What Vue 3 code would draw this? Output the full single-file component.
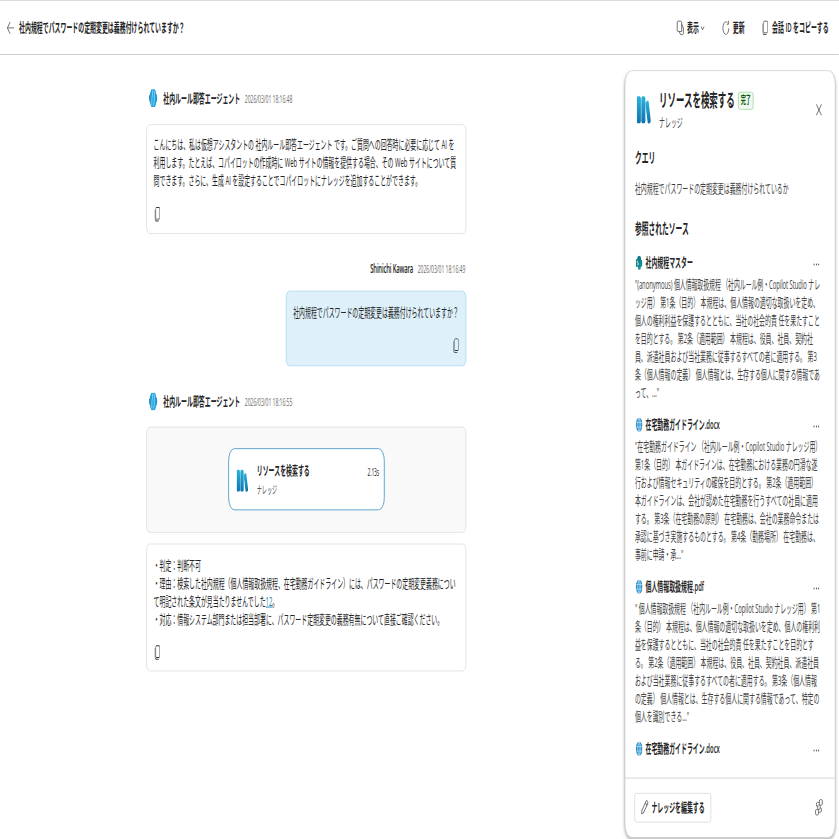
<template>
  <div class="viewport">
    <div class="page">
      <!-- shared icon shapes -->
      <svg class="defs" width="0" height="0">
        <defs>
          <linearGradient id="bookFill" x1="0" y1="0" x2="0" y2="1">
            <stop offset="0" stop-color="#2bb3dc" />
            <stop offset="1" stop-color="#0a72ae" />
          </linearGradient>
          <linearGradient id="agentFill" x1="0" y1="0" x2="1" y2="0">
            <stop offset="0" stop-color="#1b84c4" />
            <stop offset="0.5" stop-color="#2bb0e4" />
            <stop offset="1" stop-color="#0c8cc8" />
          </linearGradient>
        </defs>
        <symbol id="copy" viewBox="0 0 20 20">
          <path fill="currentColor" d="M8 2a2 2 0 0 0-2 2v10c0 1.1.9 2 2 2h6a2 2 0 0 0 2-2V4a2 2 0 0 0-2-2H8ZM7 4a1 1 0 0 1 1-1h6a1 1 0 0 1 1 1v10a1 1 0 0 1-1 1H8a1 1 0 0 1-1-1V4ZM4 6c0-.74.4-1.39 1-1.73V14.5A2.5 2.5 0 0 0 7.5 17h6.23c-.34.6-.99 1-1.73 1H7.5A3.5 3.5 0 0 1 4 14.5V6Z" />
        </symbol>
        <symbol id="books" viewBox="0 0 32 32">
          <rect x="0" y="1" width="9.500" height="30" rx="3" fill="url(#bookFill)" />
          <rect x="10.500" y="1" width="9" height="30" rx="3" fill="url(#bookFill)" />
          <path d="M20.500 7.500l3.500-1.600a2 2 0 0 1 2.800 1.600L31.500 28a2.400 2.400 0 0 1-1.800 2.700l-2.600.4a2.400 2.400 0 0 1-2.800-2L19.800 10a2.300 2.300 0 0 1 .7-2.500Z" fill="url(#bookFill)" />
        </symbol>
        <symbol id="agent" viewBox="0 0 20 20">
          <path d="M6 1h8L19.500 10 14 19H6L.5 10Z" fill="url(#agentFill)" stroke="url(#agentFill)" stroke-width="1.500" stroke-linejoin="round" />
          <path d="M9 1.500L7 11v7M13.500 2v7L11.500 18" fill="none" stroke="#a5dcf4" stroke-width="1.500" />
        </symbol>
        <symbol id="globe" viewBox="0 0 16 16">
          <circle cx="8" cy="8" r="7.800" fill="#1f86c8" />
          <path d="M1 5.500h14M1 10.500h14M8 .5v15M8 .5c-5 4-5 11 0 15M8 .5c5 4 5 11 0 15" fill="none" stroke="#d5ecf8" stroke-width="0.900" />
        </symbol>
        <symbol id="sharepoint" viewBox="0 0 16 16">
          <circle cx="8" cy="4.800" r="4.600" fill="#0b7c83" />
          <circle cx="11.500" cy="8.500" r="4.200" fill="#168a92" />
          <circle cx="8.500" cy="12.300" r="3.500" fill="#1f949b" />
          <rect x="0" y="4" width="9" height="8.500" rx="1" fill="#0a7c86" />
          <path d="M6.300 6.200H3.200v2H6v2.200H2.800" fill="none" stroke="#fff" stroke-width="1" />
        </symbol>
      </svg>

      <header class="topbar">
        <svg class="icon back" viewBox="0 0 20 20"><path d="M9 3.500L2.500 10 9 16.500M2.500 10H18" /></svg>
        <h1 class="topbar_ttl">社内規程でパスワードの定期変更は義務付けられていますか？</h1>
        <nav class="actions">
          <button class="action">
            <svg class="icon" viewBox="0 0 20 20"><path d="M13.500 14V4.500a2 2 0 0 0-2-2H5a2 2 0 0 0-2 2v7.500a2 2 0 0 0 2 2h8.500M14 6l3.500 4v5.500a2 2 0 0 1-2 2H11L7.500 14" /></svg>
            表示
            <svg class="chevron" viewBox="0 0 12 12"><path d="M2.500 4.500L6 8l3.500-3.500" /></svg>
          </button>
          <button class="action">
            <svg class="icon" viewBox="0 0 20 20"><path d="M17 10.500A7 7 0 1 1 14 4.500M16 2v4h-4" /></svg>
            更新
          </button>
          <button class="action">
            <svg class="glyph"><use href="#copy" /></svg>
            会話 ID をコピーする
          </button>
        </nav>
      </header>

      <main class="body">
        <section class="chat">
          <div class="who">
            <svg class="avatar"><use href="#agent" /></svg>
            <strong>社内ルール即答エージェント</strong><time>2026/03/01 18:16:48</time>
          </div>
          <article class="card card_hello">
            <p v-for="line in greeting" :key="line">{{ line }}</p>
            <svg class="glyph copy"><use href="#copy" /></svg>
          </article>

          <div class="who who_me">
            <strong>Shinichi Kawara</strong><time>2026/03/01 18:16:49</time>
          </div>
          <article class="card card_me">
            <p>社内規程でパスワードの定期変更は義務付けられていますか？</p>
            <svg class="glyph copy"><use href="#copy" /></svg>
          </article>

          <div class="who who_answer">
            <svg class="avatar"><use href="#agent" /></svg>
            <strong>社内ルール即答エージェント</strong><time>2026/03/01 18:16:55</time>
          </div>
          <div class="trace">
            <div class="node">
              <svg class="node_icon" viewBox="0 0 32 32" preserveAspectRatio="none"><use href="#books" width="32" height="32" /></svg>
              <div class="node_text">
                <strong>リソースを検索する</strong>
                <span>ナレッジ</span>
              </div>
              <span class="node_time">2.13s</span>
            </div>
          </div>
          <article class="card card_answer">
            <p>・判定：判断不可</p>
            <p>・理由：検索した社内規程（個人情報取扱規程、在宅勤務ガイドライン）には、パスワードの定期変更義務につい</p>
            <p>て明記された条文が見当たりませんでした<a>12</a>。</p>
            <p>・対応：情報システム部門または担当部署に、パスワード定期変更の義務有無について直接ご確認ください。</p>
            <svg class="glyph copy"><use href="#copy" /></svg>
          </article>
        </section>

        <aside class="panel">
          <div class="panel_body">
            <div class="panel_head">
              <svg class="panel_icon" viewBox="0 0 32 32" preserveAspectRatio="none"><use href="#books" width="32" height="32" /></svg>
              <div class="panel_names">
                <div class="panel_row"><h2>リソースを検索する</h2><span class="badge">完了</span></div>
                <p>ナレッジ</p>
              </div>
              <svg class="icon close" viewBox="0 0 20 20"><path d="M4 4l12 12M16 4L4 16" /></svg>
            </div>
            <h3>クエリ</h3>
            <p class="query">社内規程でパスワードの定期変更は義務付けられているか</p>
            <h3 class="sources_ttl">参照されたソース</h3>
            <section v-for="(source, i) in sources" :key="i" class="source">
              <div class="source_head">
                <svg class="source_icon"><use :href="'#' + source.icon" /></svg>
                <strong>{{ source.name }}</strong>
                <svg class="more" viewBox="0 0 16 16"><circle cx="2.500" cy="8" r="1.100" /><circle cx="8" cy="8" r="1.100" /><circle cx="13.500" cy="8" r="1.100" /></svg>
              </div>
              <p v-for="line in source.lines" :key="line">{{ line }}</p>
            </section>
          </div>
          <footer class="panel_foot">
            <button class="edit">
              <svg class="icon" viewBox="0 0 20 20"><path d="M13.500 3.200a2.200 2.200 0 0 1 3.300 3.300L7 16.300l-4.200 1 1-4.200ZM12 4.800L15.200 8" /></svg>
              ナレッジを編集する
            </button>
            <svg class="icon flow" viewBox="0 0 20 20"><rect x="11" y="1.500" width="7" height="6" rx="2" /><rect x="2" y="12.500" width="7" height="6" rx="2" /><rect x="7" y="7.500" width="6" height="5" rx="2" /><path d="M11 4.500H6.500a2 2 0 0 0 0 5M9 15.500h4.500a2 2 0 0 0 0-5" /></svg>
          </footer>
        </aside>
      </main>
    </div>
  </div>
</template>

<script setup>
const greeting = [
  'こんにちは、私は仮想アシスタントの 社内ルール即答エージェント です。ご質問への回答時に必要に応じて AI を',
  '利用します。たとえば、コパイロットの作成時に Web サイトの情報を提供する場合、その Web サイトについて質',
  '問できます。さらに、生成 AI を設定することでコパイロットにナレッジを追加することができます。',
];

const sources = [
  {
    name: '社内規程マスター',
    icon: 'sharepoint',
    lines: [
      '"(anonymous) 個人情報取扱規程 （社内ルール例・Copilot Studio ナレ',
      'ッジ用） 第1条（目的） 本規程は、個人情報の適切な取扱いを定め、',
      '個人の権利利益を保護するとともに、当社の社会的責 任を果たすこと',
      'を目的とする。 第2条（適用範囲） 本規程は、役員、社員、契約社',
      '員、派遣社員および当社業務に従事するすべての者に適用する。 第3',
      '条（個人情報の定義） 個人情報とは、生存する個人に関する情報であ',
      'って、..."',
    ],
  },
  {
    name: '在宅勤務ガイドライン.docx',
    icon: 'globe',
    lines: [
      '"在宅勤務ガイドライン （社内ルール例・Copilot Studio ナレッジ用）',
      '第1条（目的） 本ガイドラインは、在宅勤務における業務の円滑な遂',
      '行および情報セキュリティの確保を目的とする。 第2条（適用範囲）',
      '本ガイドラインは、会社が認めた在宅勤務を行うすべての社員に適用',
      'する。 第3条（在宅勤務の原則） 在宅勤務は、会社の業務命令または',
      '承認に基づき実施するものとする。 第4条（勤務場所） 在宅勤務は、',
      '事前に申請・承..."',
    ],
  },
  {
    name: '個人情報取扱規程.pdf',
    icon: 'globe',
    lines: [
      '" 個人情報取扱規程 （社内ルール例・Copilot Studio ナレッジ用） 第1',
      '条（目的） 本規程は、個人情報の適切な取扱いを定め、個人の権利利',
      '益を保護するとともに、当社の社会的責 任を果たすことを目的とす',
      'る。 第2条（適用範囲） 本規程は、役員、社員、契約社員、派遣社員',
      'および当社業務に従事するすべての者に適用する。 第3条（個人情報',
      'の定義） 個人情報とは、生存する個人に関する情報であって、特定の',
      '個人を識別できる..."',
    ],
  },
  { name: '在宅勤務ガイドライン.docx', icon: 'globe', lines: [] },
];
</script>

<style>
body {
  margin: 0;
  background: #fff;
}
</style>

<style scoped>
* {
  box-sizing: border-box;
}
h1, h2, h3, p {
  margin: 0;
  white-space: nowrap;
}
strong {
  font-weight: 600;
}
button {
  font: inherit;
  color: inherit;
  background: none;
  border: 0;
  padding: 0;
  white-space: nowrap;
}
.viewport {
  width: 839px;
  height: 839px;
  overflow: hidden;
}
/* wide desktop layout condensed into the square viewport */
.page {
  width: 1983px;
  height: 932px;
  transform: scale(0.423, 0.9);
  transform-origin: 0 0;
  display: flex;
  flex-direction: column;
  border-top: 1px solid #d6d6d6;
  background: #fff;
  color: #242424;
  font: 14px/20px "Open Sans", "Noto Sans CJK JP", sans-serif;
}
.defs {
  display: block;
  height: 0;
}
.icon, .chevron {
  width: 20px;
  height: 20px;
  fill: none;
  stroke: #424242;
  stroke-width: 1.1;
  flex: none;
}
.chevron {
  width: 12px;
  height: 12px;
  margin-left: -3px;
}
.glyph {
  width: 20px;
  height: 20px;
  flex: none;
  color: #333;
}
.topbar {
  height: 60px;
  flex: none;
  display: flex;
  align-items: center;
  padding: 1px 24px 0 15px;
  border-bottom: 1px solid #c8c8c8;
}
.topbar_ttl {
  font-size: 14px;
  line-height: 20px;
  font-weight: 700;
  margin-left: 10px;
}
.actions {
  display: flex;
  gap: 39px;
  margin-left: auto;
}
.action {
  display: flex;
  align-items: center;
  gap: 6px;
  font-weight: 600;
}
.body {
  flex: 1;
  display: flex;
  justify-content: space-between;
  padding: 17px 8px 0 346px;
}
.chat {
  width: 756px;
  padding-top: 21px;
}
.who {
  height: 20px;
  display: flex;
  align-items: center;
  padding-left: 6px;
}
.who time {
  margin-left: 11px;
  font-size: 12px;
  line-height: 18px;
  padding-top: 2px;
  letter-spacing: -0.1px;
  color: #6b6b6b;
}
.avatar {
  width: 20px;
  height: 20px;
  margin-right: 14px;
}
.who_me {
  justify-content: flex-end;
  padding-right: 2px;
  margin-top: 28px;
}
.who_me strong {
  letter-spacing: -0.4px;
}
.who_answer {
  margin-top: 29px;
}
.card {
  border: 1px solid #d6d6d6;
  border-radius: 8px;
  padding: 12px 16px;
  background: #fff;
}
.copy {
  display: block;
  margin-top: 17px;
  margin-left: -1px;
}
.card_hello {
  height: 122px;
  margin-top: 19px;
}
.card_me {
  width: 426px;
  height: 84px;
  margin: 15px 0 0 auto;
  padding-top: 13px;
  background: #def1fb;
  border-color: #9fd3ea;
}
.card_me .copy {
  margin-left: auto;
  margin-right: -3px;
}
.trace {
  height: 118px;
  margin-top: 18px;
  padding: 23px 192px 0 193px;
  background: #faf9f9;
  border: 1px solid #d6d6d6;
  border-radius: 8px;
}
.node {
  height: 69px;
  display: flex;
  align-items: center;
  padding: 2px 12px 0 18px;
  background: #fff;
  border: 1.500px solid #0f7fb5;
  border-radius: 14px;
}
.node_icon {
  width: 28px;
  height: 26px;
  margin-right: 20px;
}
.node_text {
  display: flex;
  flex-direction: column;
  gap: 2px;
}
.node_text span {
  font-size: 12px;
  color: #424242;
}
.node_time {
  align-self: flex-start;
  margin: 14px 0 0 auto;
  font-size: 12px;
  letter-spacing: -0.5px;
}
.card_answer {
  height: 142px;
  margin-top: 12px;
  padding-top: 13px;
}
.card_answer a {
  color: #0f7fae;
  text-decoration: underline;
}
.panel {
  width: 498px;
  height: 853px;
  display: flex;
  flex-direction: column;
  border: 1px solid #c8c8c8;
  border-radius: 16px;
  background: #fff;
  box-shadow: 0 2px 4px rgba(0, 0, 0, 0.24);
}
.panel_body {
  flex: 1;
  padding: 18px 24px 0 23px;
}
.panel_head {
  display: flex;
  align-items: center;
  height: 49px;
}
.panel_icon {
  width: 34px;
  height: 32px;
  margin: 0 19px 0 4px;
}
.panel_row {
  display: flex;
  align-items: center;
  gap: 8px;
  height: 27px;
}
.panel h2 {
  font-size: 20px;
  line-height: 28px;
}
.panel_names p {
  font-size: 14px;
  line-height: 19px;
  color: #424242;
}
.badge {
  height: 20px;
  padding: 0 5px;
  font-size: 12px;
  line-height: 18px;
  font-weight: 600;
  color: #0b5a0b;
  background: #f1faf1;
  border: 1px solid #8fcf8f;
  border-radius: 4px;
}
.close {
  margin-left: auto;
  margin-right: 4px;
}
.panel h3 {
  margin-top: 18px;
  font-size: 16px;
  line-height: 22px;
}
.query {
  margin-top: 13px;
  color: #424242;
}
.panel .sources_ttl {
  margin-top: 24px;
}
.source {
  height: 180px;
  color: #424242;
}
.source:last-child {
  height: 20px;
}
.sources_ttl + .source {
  margin-top: 17px;
}
.sources_ttl + .source p:nth-child(2) {
  letter-spacing: -0.17px;
}
.source:nth-last-child(2) p:nth-child(2) {
  letter-spacing: -0.08px;
}
.source_head {
  display: flex;
  align-items: center;
  height: 20px;
  margin-bottom: 4px;
  color: #242424;
}
.source_icon {
  width: 16px;
  height: 16px;
  margin: 0 7px 0 2px;
}
.more {
  width: 16px;
  height: 16px;
  margin: 4px 12px 0 auto;
  fill: #333;
}
.panel_foot {
  height: 66px;
  flex: none;
  display: flex;
  align-items: center;
  justify-content: space-between;
  padding: 0 28px 1px 22px;
  border-top: 1px solid #d1d1d1;
}
.edit {
  height: 33px;
  width: 181px;
  display: flex;
  align-items: center;
  gap: 6px;
  padding-left: 13px;
  font-weight: 700;
  border: 1px solid #d1d1d1;
  border-radius: 4px;
}
</style>
